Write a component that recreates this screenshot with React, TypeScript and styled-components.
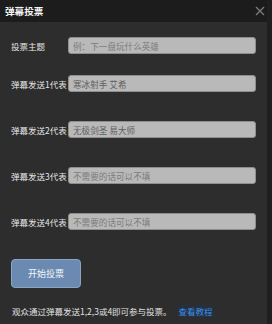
import React from 'react';
import styled, { createGlobalStyle } from 'styled-components';

const GlobalStyle = createGlobalStyle`
  html, body {
    margin: 0;
    padding: 0;
    background: #2d2d2d;
  }
  * {
    box-sizing: border-box;
  }
`

const Dialog = styled.div`
  display: flex;
  flex-direction: column;
  width: 272px;
  height: 324px;
  background-color: #2d2d2d;
  border-right: 5px solid #1f1f1f;
  font-family: 'Noto Sans CJK SC', 'Noto Sans', sans-serif;
  color: #dcdcdc;
  overflow: hidden;
`

const Header = styled.header`
  display: flex;
  justify-content: space-between;
  align-items: center;
  height: 22px;
  padding: 0 1px 0 5px;
  background-color: #1c1c1c;
`

const Title = styled.h1`
  margin: 0;
  font-size: 9.6px;
  font-weight: 700;
  color: #f2f2f2;
`

const CloseButton = styled.button`
  display: flex;
  align-items: center;
  justify-content: center;
  width: 12px;
  height: 12px;
  padding: 0;
  border: none;
  background: transparent;
  cursor: pointer;
`

const Body = styled.main`
  display: flex;
  flex-direction: column;
  padding: 15px 10px 0 11px;
`

const Fields = styled.div`
  display: flex;
  flex-direction: column;
  gap: 29px;
  margin-top: 21px;
`

const Row = styled.label`
  display: grid;
  grid-template-columns: 57px 188px;
  align-items: center;
  height: 17px;
`

const Label = styled.span`
  font-size: 8.5px;
  color: #e4e4e4;
  white-space: nowrap;
  overflow: hidden;
`

const Input = styled.input`
  width: 100%;
  height: 17px;
  padding: 0 4px;
  border: 1px solid #8e8e8e;
  border-radius: 3px;
  background-color: #b9b9b9;
  font-family: inherit;
  font-size: 8.6px;
  color: #5e5e5e;
  outline: none;

  &::placeholder {
    color: #7c7c7c;
  }
`

const StartButton = styled.button`
  width: 70px;
  height: 29px;
  margin-top: 29px;
  border: 1px solid #8aa4c4;
  border-radius: 4px;
  background-color: #6b8ab1;
  font-family: inherit;
  font-size: 9px;
  color: #f4f6fa;
  cursor: pointer;
`

const Footer = styled.p`
  display: flex;
  align-items: center;
  gap: 6px;
  margin: 17px 0 0 1px;
  font-size: 8.5px;
  color: #e0e0e0;
  white-space: nowrap;
`

const TutorialLink = styled.a`
  padding: 0 1px;
  background-color: #26303c;
  color: #3b8fe8;
  text-decoration: none;
`

const options = [
  { label: '弹幕发送1代表', value: '寒冰射手 艾希' },
  { label: '弹幕发送2代表', value: '无极剑圣 易大师' },
  { label: '弹幕发送3代表', value: '' },
  { label: '弹幕发送4代表', value: '' },
]

export default function App() {
  return (
    <>
      <GlobalStyle />
      <Dialog>
        <Header>
          <Title>弹幕投票</Title>
          <CloseButton aria-label="关闭">
            <svg width="10" height="10" viewBox="0 0 10 10">
              <path d="M1 1 L9 9 M9 1 L1 9" stroke="#7a7a7a" strokeWidth="1.4" />
            </svg>
          </CloseButton>
        </Header>
        <Body>
          <Row>
            <Label>投票主题</Label>
            <Input placeholder="例：下一盘玩什么英雄" />
          </Row>
          <Fields>
            {options.map((o) => (
              <Row key={o.label}>
                <Label>{o.label}</Label>
                <Input defaultValue={o.value} placeholder="不需要的话可以不填" />
              </Row>
            ))}
          </Fields>
          <StartButton>开始投票</StartButton>
          <Footer>
            <span>观众通过弹幕发送1,2,3或4即可参与投票。</span>
            <TutorialLink href="#">查看教程</TutorialLink>
          </Footer>
        </Body>
      </Dialog>
    </>
  );
}
